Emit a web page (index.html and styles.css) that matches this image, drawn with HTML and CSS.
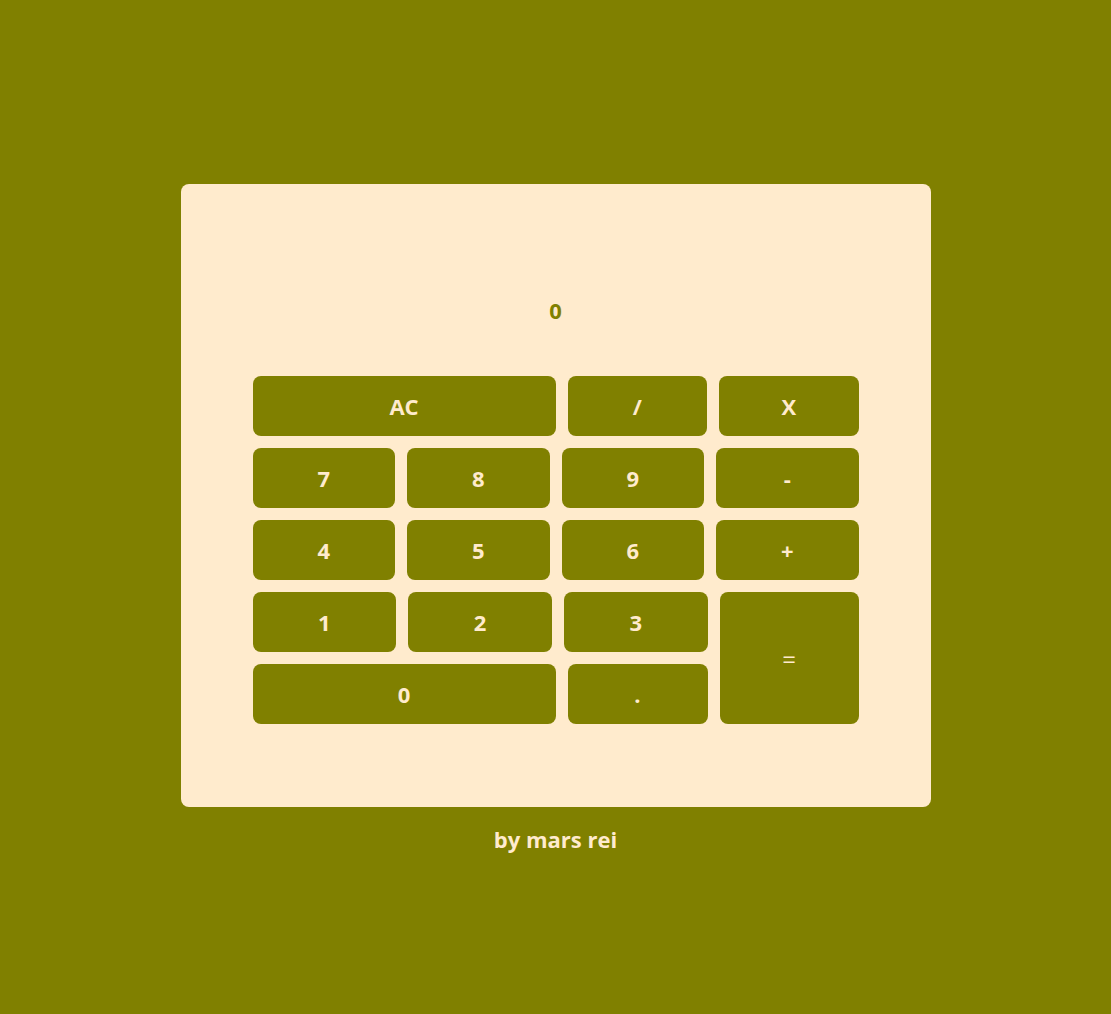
FILE: index.html
```html
<!DOCTYPE html>
<html lang="en">
<head>
<meta charset="utf-8">
<title>Calculator</title>
<link rel="stylesheet" href="styles.css">
</head>
<body>
<main class="page">
  <section class="calc">
    <div class="display">0</div>
    <div class="keys">
      <div class="row">
        <button class="key key-wide">AC</button>
        <button class="key">/</button>
        <button class="key">X</button>
      </div>
      <div class="row">
        <button class="key">7</button>
        <button class="key">8</button>
        <button class="key">9</button>
        <button class="key">-</button>
      </div>
      <div class="row">
        <button class="key">4</button>
        <button class="key">5</button>
        <button class="key">6</button>
        <button class="key">+</button>
      </div>
      <div class="bottom">
        <div class="left">
          <div class="row">
            <button class="key">1</button>
            <button class="key">2</button>
            <button class="key">3</button>
          </div>
          <div class="row">
            <button class="key key-wide">0</button>
            <button class="key">.</button>
          </div>
        </div>
        <button class="key key-eq">=</button>
      </div>
    </div>
  </section>
  <p class="credit">by mars rei</p>
</main>
</body>
</html>
```
FILE: styles.css
```css
html, body {
  margin: 0;
  padding: 0;
}
body {
  background: #808000;
  font-family: "Open Sans", "Noto Sans", sans-serif;
  font-weight: 700;
  min-height: 1014px;
}
.page {
  display: flex;
  flex-direction: column;
  align-items: center;
  padding-top: 184px;
}
.calc {
  width: 750px;
  height: 623px;
  box-sizing: border-box;
  background: #ffebcd;
  border-radius: 8px;
  padding: 0 72px;
}
.display {
  padding-top: 112px;
  height: 28px;
  line-height: 28px;
  text-align: center;
  color: #808000;
  font-size: 22px;
}
.keys {
  margin-top: 52px;
  display: flex;
  flex-direction: column;
  gap: 12px;
}
.row {
  display: flex;
  gap: 12px;
}
.bottom {
  display: flex;
  gap: 12px;
}
.left {
  flex: 1;
  display: flex;
  flex-direction: column;
  gap: 12px;
}
.key {
  flex: 1;
  height: 60px;
  border: none;
  border-radius: 8px;
  background: #808000;
  color: #ffebcd;
  font-family: inherit;
  font-weight: 700;
  font-size: 22px;
  padding: 0;
}
.key-wide {
  flex: 0 0 303px;
}
.key-eq {
  flex: 0 0 139px;
  height: 132px;
  font-weight: 400;
  font-size: 24px;
}
.credit {
  margin: 17px 0 0;
  line-height: 30px;
  color: #ffebcd;
  font-size: 22px;
}
```
